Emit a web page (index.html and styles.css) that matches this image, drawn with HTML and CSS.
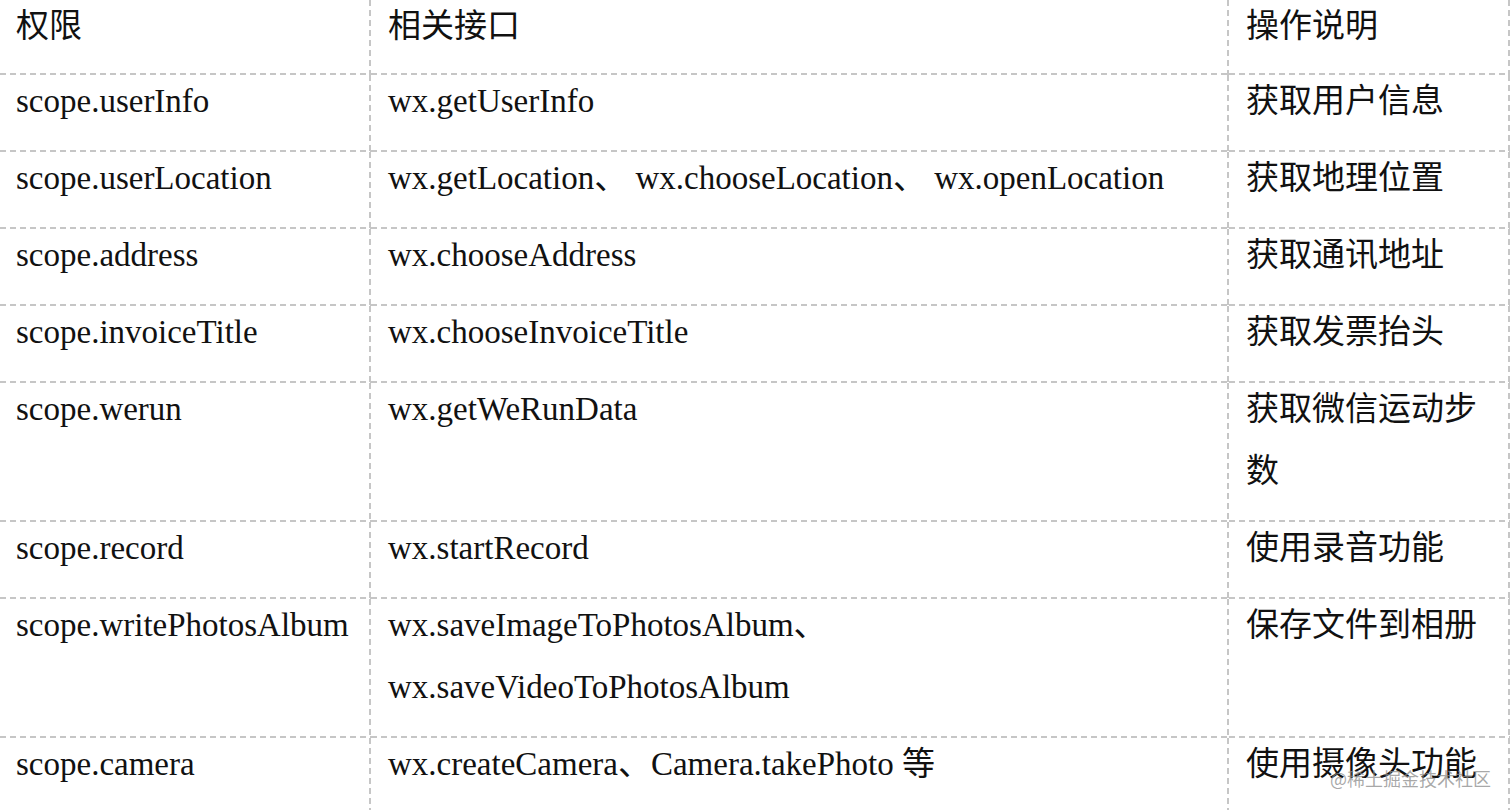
FILE: index.html
```html
<!DOCTYPE html>
<html lang="zh-CN">
<head>
<meta charset="utf-8">
<title>权限</title>
<link rel="stylesheet" href="styles.css">
</head>
<body>
<table class="perm-table">
  <colgroup><col class="c1"><col class="c2"><col class="c3"></colgroup>
  <thead>
    <tr><th><div class="txt">权限</div></th><th><div class="txt">相关接口</div></th><th><div class="txt">操作说明</div></th></tr>
  </thead>
  <tbody>
    <tr><td><div class="txt">scope.userInfo</div></td><td><div class="txt">wx.getUserInfo</div></td><td><div class="txt">获取用户信息</div></td></tr>
    <tr><td><div class="txt">scope.userLocation</div></td><td><div class="txt">wx.getLocation、 wx.chooseLocation、 wx.openLocation</div></td><td><div class="txt">获取地理位置</div></td></tr>
    <tr><td><div class="txt">scope.address</div></td><td><div class="txt">wx.chooseAddress</div></td><td><div class="txt">获取通讯地址</div></td></tr>
    <tr><td><div class="txt">scope.invoiceTitle</div></td><td><div class="txt">wx.chooseInvoiceTitle</div></td><td><div class="txt">获取发票抬头</div></td></tr>
    <tr><td><div class="txt">scope.werun</div></td><td><div class="txt">wx.getWeRunData</div></td><td><div class="txt">获取微信运动步数</div></td></tr>
    <tr><td><div class="txt">scope.record</div></td><td><div class="txt">wx.startRecord</div></td><td><div class="txt">使用录音功能</div></td></tr>
    <tr><td><div class="txt">scope.writePhotosAlbum</div></td><td><div class="txt">wx.saveImageToPhotosAlbum、 wx.saveVideoToPhotosAlbum</div></td><td><div class="txt">保存文件到相册</div></td></tr>
    <tr><td><div class="txt">scope.camera</div></td><td><div class="txt">wx.createCamera、Camera.takePhoto 等</div></td><td><div class="txt">使用摄像头功能</div></td></tr>
  </tbody>
</table>
<div class="watermark">@稀土掘金技术社区</div>
</body>
</html>
```

FILE: styles.css
```css
html, body {
  margin: 0;
  padding: 0;
  background: #ffffff;
}

body {
  position: relative;
  width: 1512px;
  height: 810px;
  overflow: hidden;
  font-family: "Liberation Serif", "Noto Sans CJK SC", serif;
  color: #111111;
}

.perm-table {
  table-layout: fixed;
  border-collapse: separate;
  border-spacing: 0;
  width: 1510px;
}

.perm-table col.c1 { width: 371px; }
.perm-table col.c2 { width: 858px; }
.perm-table col.c3 { width: 281px; }

.perm-table th,
.perm-table td {
  font-weight: normal;
  text-align: left;
  vertical-align: top;
  font-size: 33px;
  line-height: 62px;
  padding: 0 8px 20px 17px;
  background-image:
    repeating-linear-gradient(to right, #c6c6c6 0 6px, transparent 6px 10px),
    repeating-linear-gradient(to bottom, #c6c6c6 0 6px, transparent 6px 10px);
  background-size: 100% 2px, 2px 100%;
  background-position: left bottom, right top;
  background-repeat: no-repeat;
}

.perm-table th {
  padding-bottom: 18px;
}

.perm-table th:first-child,
.perm-table td:first-child {
  padding-left: 16px;
}

.txt {
  margin-top: -5px;
}

.watermark {
  position: absolute;
  left: 1330px;
  top: 765px;
  font-family: "Noto Sans CJK SC", sans-serif;
  font-size: 18px;
  line-height: 26px;
  color: rgba(140, 140, 140, 0.75);
  white-space: nowrap;
}
```
